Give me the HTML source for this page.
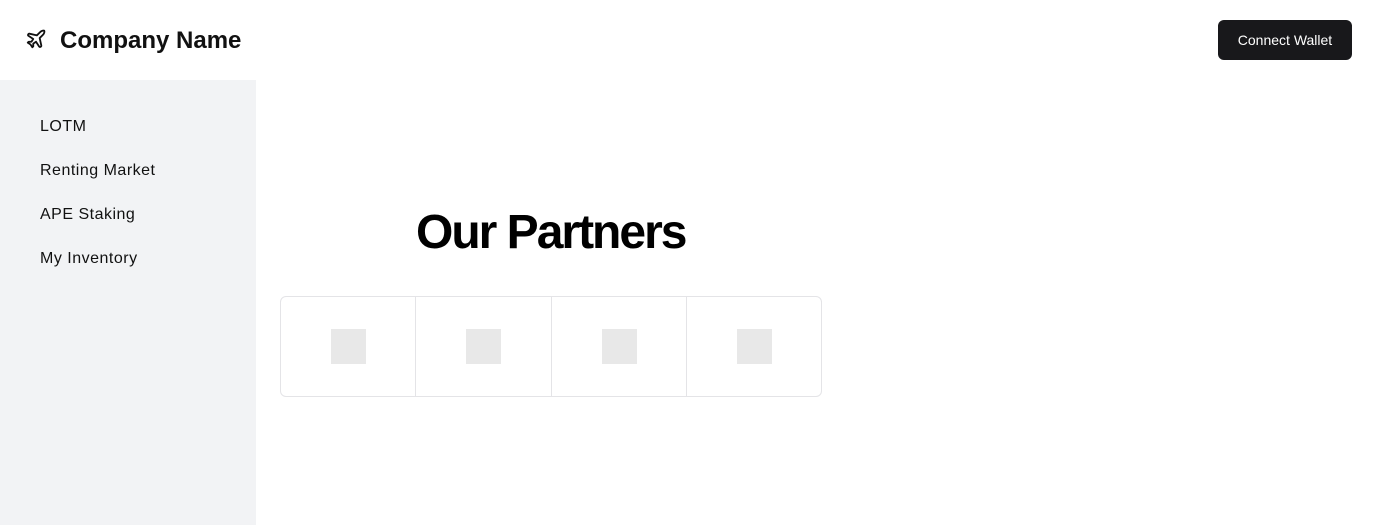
<!DOCTYPE html>
<html><head><style>
*{margin:0;padding:0;box-sizing:border-box}
body{width:1376px;height:525px;background:#fff;font-family:"Liberation Sans",sans-serif;position:relative;overflow:hidden;color:#111}
.hdr{position:absolute;left:0;top:0;width:1376px;height:80px}
.logo{position:absolute;left:25px;top:28px}
.name{position:absolute;left:60px;top:27px;font-size:24px;font-weight:bold;letter-spacing:0}
.btn{position:absolute;left:1218px;top:20px;width:134px;height:40px;background:#18181b;color:#fff;border-radius:6px;font-size:14px;line-height:40px;text-align:center}
.side{position:absolute;left:0;top:80px;width:256px;height:445px;background:#f2f3f5}
.side div{position:absolute;left:40px;font-size:16px;letter-spacing:0.5px;color:#111}
h1{position:absolute;left:416px;top:205px;font-size:48px;font-weight:bold;letter-spacing:-2px;color:#000}
.grid{position:absolute;left:280px;top:296px;width:542px;height:101px;border:1px solid #e4e4e7;border-radius:6px;display:flex}
.cell{flex:1;border-right:1px solid #e4e4e7;position:relative}
.cell:last-child{border-right:none}
.cell span{position:absolute;left:50%;top:50%;width:35px;height:35px;margin:-18px 0 0 -17px;background:#e8e8e8}
</style></head><body>
<div class="hdr">
<svg class="logo" width="22" height="22" viewBox="0 0 24 24" fill="none" stroke="#111" stroke-width="2" stroke-linecap="round" stroke-linejoin="round"><path d="M17.8 19.2 16 11l3.5-3.5C21 6 21.5 4 21 3c-1-.5-3 0-4.5 1.5L13 8 4.8 6.2c-.5-.1-.9.1-1.1.5l-.3.5c-.2.5-.1 1 .3 1.3L9 12l-2 3H4l-1 1 3 2 2 3 1-1v-3l3-2 3.5 5.3c.3.4.8.5 1.3.3l.5-.2c.4-.3.6-.7.5-1.2z"/></svg>
<div class="name">Company Name</div>
<div class="btn">Connect Wallet</div>
</div>
<div class="side">
<div style="top:38px">LOTM</div>
<div style="top:82px">Renting Market</div>
<div style="top:126px">APE Staking</div>
<div style="top:170px">My Inventory</div>
</div>
<h1>Our Partners</h1>
<div class="grid"><div class="cell"><span></span></div><div class="cell"><span></span></div><div class="cell"><span></span></div><div class="cell"><span></span></div></div>
</body></html>
